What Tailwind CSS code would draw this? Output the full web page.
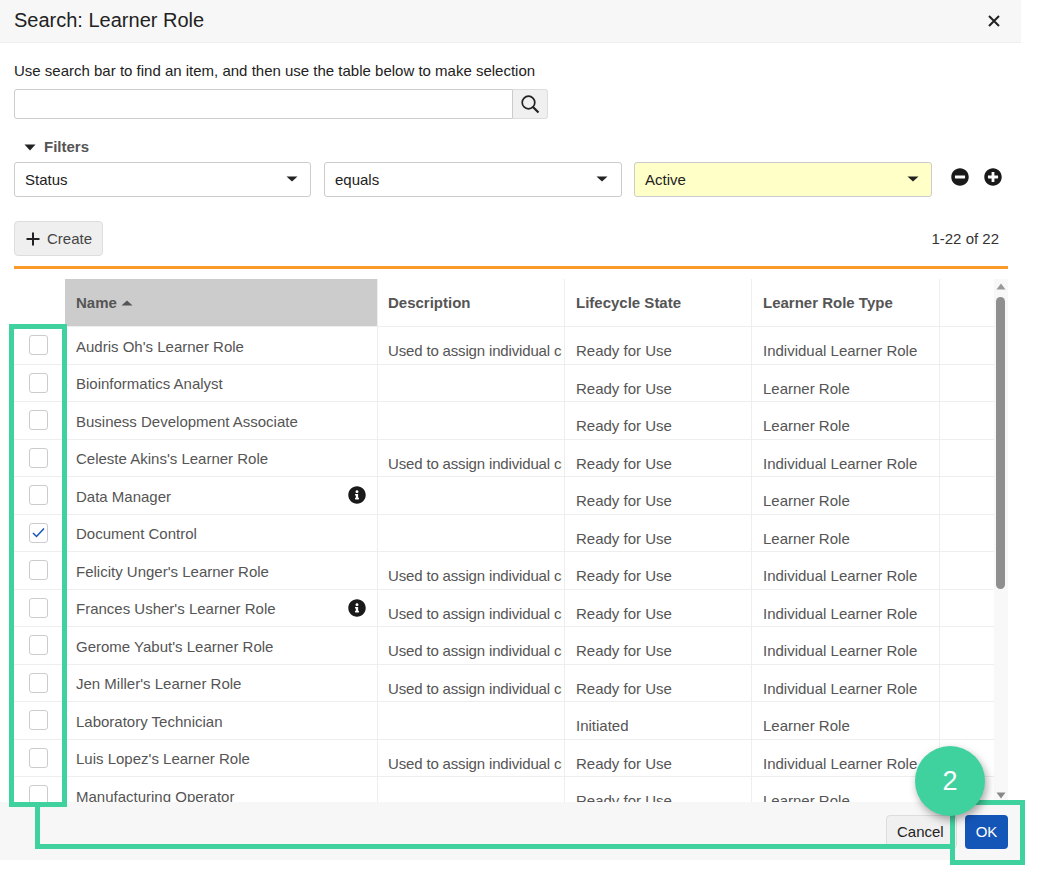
<!DOCTYPE html>
<html lang="en">
<head>
    <meta charset="UTF-8">
    <meta name="viewport" content="width=device-width, initial-scale=1.0">
    <title>Search: Learner Role</title>
    <script src="https://cdn.jsdelivr.net/npm/@tailwindcss/browser@4"></script>
</head>

<body class="bg-white font-['Liberation_Sans',Arial,sans-serif] text-[15px] text-[#333]">
    <div class="relative w-[1041px] h-[880px] overflow-hidden">
        <div class="w-[1021px] h-[860px] flex flex-col">
            <!-- header -->
            <div class="h-[43px] shrink-0 bg-[#f7f7f7] border-b border-[#eeeeee] pl-[14px] pr-[20px] flex items-center justify-between">
                <h1 class="text-[20px] text-[#222] pb-[2px]">Search: Learner Role</h1>
                <svg class="w-[14px] h-[14px]" viewBox="0 0 14 14"><path d="M2 2l10 10M12 2L2 12" stroke="#222" stroke-width="2" fill="none"/></svg>
            </div>

            <!-- content -->
            <div class="flex-1 min-h-0 pl-[14px] pr-[13px] flex flex-col">
                <p class="mt-[18px] h-[20px] leading-[20px] text-[#222]">Use search bar to find an item, and then use the table below to make selection</p>
                <div class="mt-[8px] flex h-[30px] w-[534px]">
                    <div class="w-[499px] border border-[#cccccc] rounded-l-[3px] bg-white"></div>
                    <div class="w-[35px] border border-l-0 border-[#dddddd] rounded-r-[3px] bg-[#f0f0f0] flex items-center justify-center">
                        <svg class="w-[20px] h-[20px]" viewBox="0 0 20 20" fill="none" stroke="#222" stroke-width="1.7"><circle cx="8.5" cy="8.5" r="6.3"/><path d="M13 13l5.5 5.5" stroke-width="2.2"/></svg>
                    </div>
                </div>

                <div class="mt-[18px] h-[20px] flex items-center pl-[10px] gap-[8px] font-bold text-[#555]">
                    <svg class="w-[12px] h-[7px]" viewBox="0 0 12 7"><path d="M0.5 0.5h11L6 6.5z" fill="#222"/></svg>
                    <span>Filters</span>
                </div>

                <div class="mt-[5px] flex h-[35px]">
                    <div class="w-[297px] border border-[#cccccc] rounded-[3px] bg-white pl-[10px] pr-[12px] flex items-center justify-between text-[#222]">
                        <span class="pt-[1px]">Status</span>
                        <svg class="w-[12px] h-[6px] mb-[2px]" viewBox="0 0 12 6"><path d="M0.5 0.5h11L6 5.5z" fill="#222"/></svg>
                    </div>
                    <div class="ml-[13px] w-[298px] border border-[#cccccc] rounded-[3px] bg-white pl-[10px] pr-[13px] flex items-center justify-between text-[#222]">
                        <span class="pt-[1px]">equals</span>
                        <svg class="w-[12px] h-[6px] mb-[2px]" viewBox="0 0 12 6"><path d="M0.5 0.5h11L6 5.5z" fill="#222"/></svg>
                    </div>
                    <div class="ml-[12px] w-[298px] border border-[#cccccc] rounded-[3px] bg-[#ffffc8] pl-[10px] pr-[12px] flex items-center justify-between text-[#222]">
                        <span class="pt-[1px]">Active</span>
                        <svg class="w-[12px] h-[6px] mb-[2px]" viewBox="0 0 12 6"><path d="M0.5 0.5h11L6 5.5z" fill="#222"/></svg>
                    </div>
                    <svg class="ml-[19px] mt-[6px] w-[18px] h-[18px]" viewBox="0 0 512 512"><path fill="#1a1a1a" d="M256 8C119 8 8 119 8 256s111 248 248 248 248-111 248-248S393 8 256 8zM124 296c-6.600 0-12-5.400-12-12v-56c0-6.600 5.400-12 12-12h264c6.600 0 12 5.400 12 12v56c0 6.600-5.400 12-12 12H124z"/></svg>
                    <svg class="ml-[15px] mt-[6px] w-[18px] h-[18px]" viewBox="0 0 512 512"><path fill="#1a1a1a" d="M256 8C119 8 8 119 8 256s111 248 248 248 248-111 248-248S393 8 256 8zm144 276c0 6.600-5.400 12-12 12h-92v92c0 6.600-5.400 12-12 12h-56c-6.600 0-12-5.400-12-12v-92h-92c-6.600 0-12-5.400-12-12v-56c0-6.600 5.400-12 12-12h92v-92c0-6.600 5.400-12 12-12h56c6.600 0 12 5.400 12 12v92h92c6.600 0 12 5.400 12 12v56z"/></svg>
                </div>

                <div class="mt-[24px] h-[35px] flex items-center justify-between">
                    <button class="h-[35px] w-[89px] border border-[#dddddd] rounded-[4px] bg-[#efefef] pl-[11px] flex items-center gap-[7px] text-[#444]">
                        <svg class="w-[14px] h-[14px]" viewBox="0 0 14 14"><path d="M7 0.500v13M0.500 7h13" stroke="#222" stroke-width="2" fill="none"/></svg>
                        <span class="pt-[1px]">Create</span>
                    </button>
                    <span class="mr-[9px] pt-[1px] text-[#333]">1-22 of 22</span>
                </div>

                <div class="mt-[10px] h-[3px] bg-[#fb9a28] shrink-0"></div>

                <!-- table + scrollbar -->
                <div class="mt-[10px] flex h-[523px] overflow-hidden">
                    <div class="w-[980px] shrink-0">
                        <div class="flex h-[48px] border-b border-[#eeeeee] font-bold text-[#555]">
                            <div class="w-[51px] shrink-0"></div>
                            <div class="w-[312px] shrink-0 bg-[#cccccc] pl-[11px] pt-[1px] flex items-center gap-[4px]">Name
                                <svg class="w-[12px] h-[6px]" viewBox="0 0 12 6"><path d="M6 0.500L11.500 5.500H0.500z" fill="#555"/></svg>
                            </div>
                            <div class="w-[187px] shrink-0 border-l border-[#eeeeee] pl-[10px] pt-[1px] flex items-center">Description</div>
                            <div class="w-[187px] shrink-0 border-l border-[#eeeeee] pl-[11px] pt-[1px] flex items-center">Lifecycle State</div>
                            <div class="w-[188px] shrink-0 border-l border-[#eeeeee] pl-[11px] pt-[1px] flex items-center">Learner Role Type</div>
                            <div class="flex-1 border-l border-[#eeeeee]"></div>
                        </div>
                        <div id="rows"></div>
                    </div>
                    <div class="relative flex-1 bg-[#f8f8f8]">
                        <svg class="absolute left-[2px] top-[4px] w-[10px] h-[7px]" viewBox="0 0 10 7"><path d="M5 0.500L9.500 6.500H0.500z" fill="#999"/></svg>
                        <div class="absolute left-[2px] top-[18px] w-[9px] h-[292px] rounded-[5px] bg-[#8f8f8f]"></div>
                        <svg class="absolute left-[2px] bottom-[3px] w-[10px] h-[7px]" viewBox="0 0 10 7"><path d="M0.500 0.500H9.500L5 6.500z" fill="#888"/></svg>
                    </div>
                </div>
            </div>

            <!-- footer -->
            <div class="relative h-[58px] shrink-0 bg-[#f7f7f7] flex items-start justify-end pr-[13px] pt-[13px] gap-[8px]">
                <button class="h-[34px] w-[71px] border border-[#dddddd] rounded-[4px] bg-[#f0f0f0] text-left pl-[10px] text-[#222]">Cancel</button>
                <button class="h-[34px] w-[43px] rounded-[4px] bg-[#1455b8] text-white">OK</button>
            </div>
        </div>

        <!-- annotation -->
        <div class="absolute left-[9px] top-[324px] w-[58px] h-[483px] border-[5px] border-[#3fd29f]"></div>
        <div class="absolute left-[35px] top-[807px] w-[920px] h-[42px] border-l-[5px] border-b-[5px] border-[#3fd29f]"></div>
        <div class="absolute left-[950px] top-[800px] w-[75px] h-[65px] border-[5px] border-[#3fd29f]"></div>
        <div class="absolute left-[915px] top-[746px] w-[70px] h-[70px] rounded-full bg-[#3fd29f] shadow-[2px_4px_8px_rgba(0,0,0,0.35)] flex items-center justify-center text-white text-[27px]">2</div>
    </div>

    <script>
        const used = "Used to assign individual curricula";
        const indiv = "Individual Learner Role";
        const plain = "Learner Role";
        const ready = "Ready for Use";
        const roles = [
            ["Audris Oh's Learner Role", used, ready, indiv],
            ["Bioinformatics Analyst", "", ready, plain],
            ["Business Development Associate", "", ready, plain],
            ["Celeste Akins's Learner Role", used, ready, indiv],
            ["Data Manager", "", ready, plain, true],
            ["Document Control", "", ready, plain, false, true],
            ["Felicity Unger's Learner Role", used, ready, indiv],
            ["Frances Usher's Learner Role", used, ready, indiv, true],
            ["Gerome Yabut's Learner Role", used, ready, indiv],
            ["Jen Miller's Learner Role", used, ready, indiv],
            ["Laboratory Technician", "", "Initiated", plain],
            ["Luis Lopez's Learner Role", used, ready, indiv],
            ["Manufacturing Operator", "", ready, plain]
        ];
        const infoIcon = `<svg class="absolute right-[11px] top-[9px] w-[18px] h-[18px]" viewBox="0 0 512 512"><path fill="#1a1a1a" d="M256 8C119.043 8 8 119.083 8 256c0 136.997 111.043 248 248 248s248-111.003 248-248C504 119.083 392.957 8 256 8zm0 110c23.196 0 42 18.804 42 42s-18.804 42-42 42-42-18.804-42-42 18.804-42 42-42zm56 254c0 6.627-5.373 12-12 12h-88c-6.627 0-12-5.373-12-12v-24c0-6.627 5.373-12 12-12h12v-64h-12c-6.627 0-12-5.373-12-12v-24c0-6.627 5.373-12 12-12h64c6.627 0 12 5.373 12 12v100h12c6.627 0 12 5.373 12 12v24z"/></svg>`;
        const check = `<svg class="w-[15px] h-[15px]" viewBox="0 0 15 15"><path d="M2 8l3.500 3.500L13 3.500" stroke="#1455b8" stroke-width="1.500" fill="none"/></svg>`;
        document.getElementById("rows").innerHTML = roles.map(r => `
            <div class="flex h-[37.5px] border-b border-[#eeeeee] text-[#555] leading-[20px]">
                <div class="w-[51px] shrink-0 flex justify-center pt-[8px] pr-[3px]">
                    <div class="w-[19px] h-[20px] border border-[#cccccc] rounded-[3px] bg-white flex items-center justify-center">${r[5] ? check : ""}</div>
                </div>
                <div class="relative w-[312px] shrink-0 border-l border-[#eeeeee] pl-[10px] pt-[9.5px]">${r[0]}${r[4] ? infoIcon : ""}</div>
                <div class="w-[187px] shrink-0 border-l border-[#eeeeee] pl-[10px] pt-[14px]"><div class="w-[174px] overflow-hidden whitespace-nowrap tracking-[-0.16px]">${r[1]}</div></div>
                <div class="w-[187px] shrink-0 border-l border-[#eeeeee] pl-[11px] pt-[14px]">${r[2]}</div>
                <div class="w-[188px] shrink-0 border-l border-[#eeeeee] pl-[11px] pt-[14px]">${r[3]}</div>
                <div class="flex-1 border-l border-[#eeeeee]"></div>
            </div>`).join("");
    </script>
</body>
</html>
